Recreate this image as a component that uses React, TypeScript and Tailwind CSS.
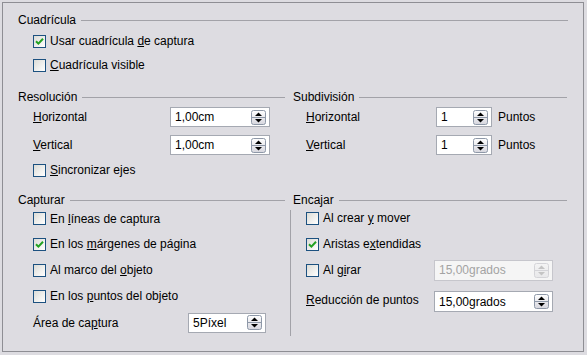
import React from "react";

const font = { fontFamily: '"Liberation Sans", Arial, sans-serif' };

function Heading({ title }: { title: string }) {
  return (
    <div className="flex items-center h-[12px] gap-[5px]">
      <span className="leading-none whitespace-nowrap">{title}</span>
      <div className="flex-1 h-px bg-[#a2a2a8]" />
    </div>
  );
}

function Box({ checked }: { checked?: boolean }) {
  return (
    <span className="w-[13px] h-[13px] shrink-0 border border-[#1c5180] bg-gradient-to-br from-[#dcdcd7] to-white flex items-center justify-center">
      {checked && (
        <svg width="9" height="9" viewBox="0 0 9 9">
          <path d="M1 4.2 L3.4 6.6 L8 1.8" stroke="#21a121" strokeWidth="2" fill="none" />
        </svg>
      )}
    </span>
  );
}

function Check({ checked, children }: { checked?: boolean; children: React.ReactNode }) {
  return (
    <span className="flex items-center gap-[4px] whitespace-nowrap">
      <Box checked={checked} />
      <span className="leading-none">{children}</span>
    </span>
  );
}

function Spinner({ disabled }: { disabled?: boolean }) {
  const c = disabled ? "#c4c4c4" : "#000";
  const b = disabled ? "#d4d4d8" : "#8e98a8";
  return (
    <svg width="15" height="15" viewBox="0 0 15 15" className="shrink-0">
      <defs>
        <linearGradient id={disabled ? "gd" : "ge"} x1="0" y1="0" x2="0" y2="1">
          <stop offset="0" stopColor={disabled ? "#f4f4f4" : "#ffffff"} />
          <stop offset="1" stopColor={disabled ? "#e8e8ea" : "#d6d6de"} />
        </linearGradient>
      </defs>
      <rect x="0.5" y="0.5" width="14" height="14" rx="2" fill={`url(#${disabled ? "gd" : "ge"})`} stroke={b} />
      <line x1="1" y1="7.5" x2="14" y2="7.5" stroke={b} />
      <path d="M4 6 L7.5 2.5 L11 6 Z" fill={c} />
      <path d="M4 9 L7.5 12.5 L11 9 Z" fill={c} />
    </svg>
  );
}

function Spin({ value, w, h = "h-[20px]", disabled }: { value: string; w: string; h?: string; disabled?: boolean }) {
  return (
    <div
      className={`${w} ${h} shrink-0 border flex items-center justify-between pl-[4px] pr-[3px] ${
        disabled ? "bg-[#f5f5f5] border-[#c6c6cc] text-[#a3a3a3]" : "bg-white border-[#a5a9b2] text-black"
      }`}
    >
      <span className="leading-none">{value}</span>
      <Spinner disabled={disabled} />
    </div>
  );
}

export default function App() {
  return (
    <div className="w-[587px] h-[355px] bg-[#dddce1] pt-[2px] pl-[2px] text-[12px] text-black" style={font}>
      <div className="w-[582px] h-[350px] border border-[#8e8e94] flex flex-col pt-[10px] pl-[15px] pr-[15px]">
        <div className="h-[14px] flex items-center">
          <div className="flex-1"><Heading title="Cuadrícula" /></div>
        </div>
        <div className="pl-[15px] mt-[2px]">
          <div className="h-[24px] flex items-center">
            <Check checked>
              Usar cuadrícula <u>d</u>e captura
            </Check>
          </div>
          <div className="h-[24px] flex items-center">
            <Check>
              <u>C</u>uadrícula visible
            </Check>
          </div>
        </div>

        <div className="grid grid-cols-[267px_274px] gap-x-[8px] mt-[13px]">
          {/* Resolución */}
          <div className="flex flex-col">
            <div className="h-[14px] flex items-center"><div className="flex-1"><Heading title="Resolución" /></div></div>
            <div className="pl-[15px] flex flex-col">
              <div className="h-[20px] mt-[3px] flex items-center">
                <span className="w-[137px]"><u>H</u>orizontal</span>
                <Spin value="1,00cm" w="w-[100px]" />
              </div>
              <div className="h-[20px] mt-[8px] flex items-center">
                <span className="w-[137px]"><u>V</u>ertical</span>
                <Spin value="1,00cm" w="w-[100px]" />
              </div>
              <div className="h-[20px] mt-[5px] flex items-center">
                <Check>
                  <u>S</u>incronizar ejes
                </Check>
              </div>
            </div>
          </div>
          {/* Subdivisión */}
          <div className="flex flex-col">
            <div className="h-[14px] flex items-center"><div className="flex-1"><Heading title="Subdivisión" /></div></div>
            <div className="pl-[13px] flex flex-col">
              <div className="h-[20px] mt-[3px] flex items-center">
                <span className="w-[130px]"><u>H</u>orizontal</span>
                <Spin value="1" w="w-[56px]" />
                <span className="ml-[6px]">Puntos</span>
              </div>
              <div className="h-[20px] mt-[8px] flex items-center">
                <span className="w-[130px]"><u>V</u>ertical</span>
                <Spin value="1" w="w-[56px]" />
                <span className="ml-[6px]">Puntos</span>
              </div>
            </div>
          </div>
        </div>

        <div className="grid grid-cols-[267px_274px] gap-x-[8px] mt-[14px]">
          {/* Capturar */}
          <div className="flex flex-col">
            <div className="h-[12px] flex items-center"><div className="flex-1"><Heading title="Capturar" /></div></div>
            <div className="pl-[15px] flex flex-col">
              <div className="h-[25px] flex items-center">
                <Check>
                  En <u>l</u>íneas de captura
                </Check>
              </div>
              <div className="h-[26px] flex items-center">
                <Check checked>
                  En los <u>m</u>árgenes de página
                </Check>
              </div>
              <div className="h-[26px] flex items-center">
                <Check>
                  Al marco del <u>o</u>bjeto
                </Check>
              </div>
              <div className="h-[26px] flex items-center">
                <Check>
                  En los <u>p</u>untos del objeto
                </Check>
              </div>
              <div className="h-[27px] flex items-center">
                <span className="w-[155px]">Área de ca<u>p</u>tura</span>
                <Spin value="5Píxel" w="w-[78px]" />
              </div>
            </div>
          </div>
          {/* Encajar */}
          <div className="flex flex-col">
            <div className="h-[12px] flex items-center"><div className="flex-1"><Heading title="Encajar" /></div></div>
            <div className="ml-[-3px] mt-[4px] h-[126px] border-l border-[#a2a2a8] pl-[15px] flex flex-col">
              <div className="h-[21px] pb-[5px] flex items-center">
                <Check>
                  Al crear <u>y</u> mover
                </Check>
              </div>
              <div className="h-[26px] flex items-center">
                <Check checked>
                  Aristas e<u>x</u>tendidas
                </Check>
              </div>
              <div className="h-[26px] flex items-center">
                <span className="w-[128px]">
                  <Check>
                    Al g<u>i</u>rar
                  </Check>
                </span>
                <Spin value="15,00grados" w="w-[119px]" h="h-[21px]" disabled />
              </div>
              <div className="h-[32px] flex items-end pb-[3px]">
                <span className="w-[128px] self-center mt-[5px]"><u>R</u>educción de puntos</span>
                <Spin value="15,00grados" w="w-[119px]" h="h-[21px]" />
              </div>
            </div>
          </div>
        </div>
      </div>
    </div>
  );
}
